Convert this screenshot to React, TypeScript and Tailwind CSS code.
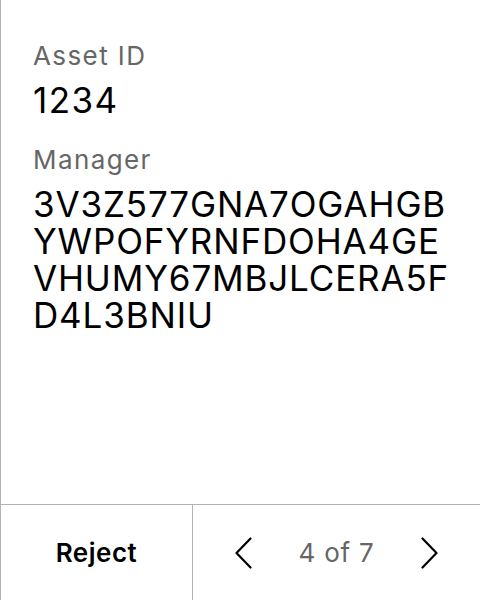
const Chevron = ({ dir }: { dir: "left" | "right" }) => (
  <svg width="17" height="32" viewBox="0 0 17 32" fill="none" stroke="black" strokeWidth="2.2" strokeLinecap="round" strokeLinejoin="round">
    {dir === "left" ? <path d="M15.5 1.5 L1.5 16 L15.5 30.5" /> : <path d="M1.5 1.5 L15.5 16 L1.5 30.5" />}
  </svg>
);

const Field = ({ label, lines, wide }: { label: string; lines: string[]; wide?: boolean }) => (
  <div className="flex flex-col">
    <div className="text-[26px] leading-[32px] tracking-[1.4px] text-[#666666] mb-[10px]">{label}</div>
    <div className={wide ? "text-[35px] leading-[37px] tracking-[1.4px] text-black" : "text-[35px] leading-[37px] tracking-[0.85px] text-black"}>
      {lines.map((l) => (
        <div key={l}>{l}</div>
      ))}
    </div>
  </div>
);

export default function App() {
  return (
    <div
      className="w-[480px] h-[600px] flex flex-col bg-white border-l border-[#b3b3b3]"
      style={{ fontFamily: "Inter, 'Noto Sans', sans-serif" }}
    >
      <div className="flex-1 flex flex-col gap-[25px] pl-8 pt-[40px]">
        <Field label="Asset ID" lines={["1234"]} wide />
        <Field
          label="Manager"
          lines={["3V3Z577GNA7OGAHGB", "YWPOFYRNFDOHA4GE", "VHUMY67MBJLCERA5F", "D4L3BNIU"]}
        />
      </div>
      <div className="h-[96px] flex border-t border-[#b3b3b3]">
        <button className="w-[192px] flex items-center justify-center text-[26px] tracking-[0.5px] font-semibold text-black border-r border-[#b3b3b3]">
          Reject
        </button>
        <div className="flex-1 flex items-center justify-between px-[42px]">
          <Chevron dir="left" />
          <span className="text-[26px] tracking-[0.8px] text-[#666666]">4 of 7</span>
          <Chevron dir="right" />
        </div>
      </div>
    </div>
  );
}
